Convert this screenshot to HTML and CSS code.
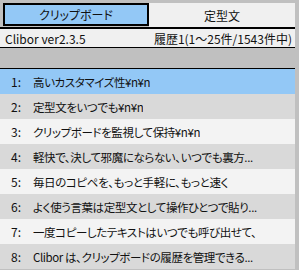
FILE: index.html
```html
<!DOCTYPE html>
<html lang="ja">
<head>
    <meta charset="UTF-8">
    <title>Clibor</title>
    <link rel="stylesheet" href="styles.css">
</head>
<body>
    <div class="app">
        <div class="tabs">
            <div class="tab active">クリップボード</div>
            <div class="tab">定型文</div>
        </div>

        <div class="info">
            <span>Clibor ver2.3.5</span>
            <span>履歴1(1〜25件/1543件中)</span>
        </div>

        <div class="spacer"></div>

        <ul class="list">
            <li class="selected"><span class="num">1:</span><span class="text">高いカスタマイズ性¥n¥n</span></li>
            <li><span class="num">2:</span><span class="text">定型文をいつでも¥n¥n</span></li>
            <li><span class="num">3:</span><span class="text">クリップボードを監視して保持¥n¥n</span></li>
            <li><span class="num">4:</span><span class="text">軽快で、決して邪魔にならない、いつでも裏方...</span></li>
            <li><span class="num">5:</span><span class="text">毎日のコピペを、もっと手軽に、もっと速く</span></li>
            <li><span class="num">6:</span><span class="text">よく使う言葉は定型文として操作ひとつで貼り...</span></li>
            <li><span class="num">7:</span><span class="text">一度コピーしたテキストはいつでも呼び出せて、</span></li>
            <li><span class="num">8:</span><span class="text">Clibor は、クリップボードの履歴を管理できる...</span></li>
        </ul>
    </div>
</body>
</html>
```

FILE: styles.css
```css
body {
    margin: 0;
    background: #c0c0c0;
    color: #111;
    font-family: "Noto Sans CJK JP", "Noto Sans", sans-serif;
    font-size: 12px;
    font-feature-settings: "palt";
}

.app {
    width: 295px;
    height: 270px;
    overflow: hidden;
}

.tabs {
    display: flex;
    height: 24px;
    padding: 3px 0 0 3px;
    border-bottom: 2px solid #000;
}

.tab {
    flex: 1;
    display: flex;
    justify-content: center;
    align-items: center;
    background: #f0f0f0;
}

.tab.active {
    flex: 0 0 146px;
    height: 23px;
    box-sizing: border-box;
    background: #93c8f6;
    border: 2px solid #000;
}

.info {
    display: flex;
    justify-content: space-between;
    align-items: center;
    height: 18px;
    padding: 0 3px 0 5px;
    background: #f0f0f0;
    border-bottom: 1px solid #000;
}

.spacer {
    height: 20px;
    border-bottom: 1px solid #000;
}

.list {
    list-style: none;
    margin: 0;
    padding: 0;
}

.list li {
    display: flex;
    align-items: center;
    height: 25px;
    background: #f3f3f3;
    white-space: nowrap;
    overflow: hidden;
}

.list li:nth-child(even) {
    background: #d9d9d9;
}

.list li.selected {
    background: #93c8f6;
}

.num {
    width: 22px;
    padding-left: 11px;
    flex-shrink: 0;
}

.text {
    overflow: hidden;
    font-size: 11.5px;
    letter-spacing: -0.4px;
}
```
